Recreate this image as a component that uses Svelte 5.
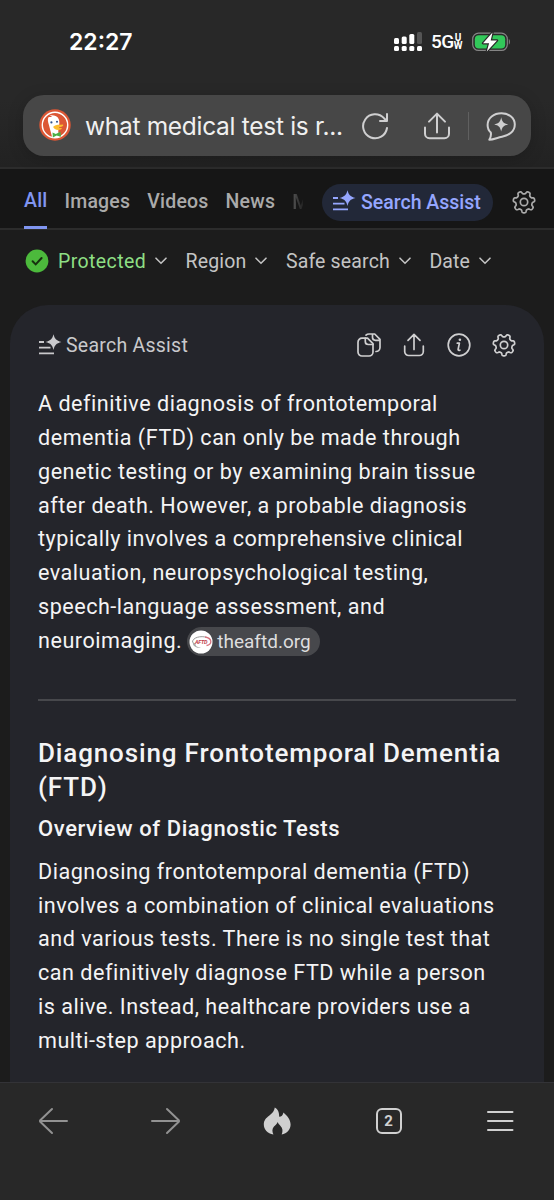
<script lang="ts">
	const tabs = ['Images', 'Videos', 'News'];
	const filters = ['Region', 'Safe search', 'Date'];

	const summary = [
		'A definitive diagnosis of frontotemporal',
		'dementia (FTD) can only be made through',
		'genetic testing or by examining brain tissue',
		'after death. However, a probable diagnosis',
		'typically involves a comprehensive clinical',
		'evaluation, neuropsychological testing,',
		'speech-language assessment, and'
	];

	const overview = [
		'Diagnosing frontotemporal dementia (FTD)',
		'involves a combination of clinical evaluations',
		'and various tests. There is no single test that',
		'can definitively diagnose FTD while a person',
		'is alive. Instead, healthcare providers use a',
		'multi-step approach.'
	];

	// closed outline of a cog with soft lobes
	function cog(teeth: number, mid: number, depth: number) {
		let d = '';
		for (let i = 0; i < 140; i++) {
			const a = (i / 140) * Math.PI * 2;
			const r = mid + depth * Math.tanh(2.2 * Math.cos(teeth * a));
			d += `${i ? 'L' : 'M'}${(12 + r * Math.sin(a)).toFixed(2)} ${(12 + r * Math.cos(a)).toFixed(2)}`;
		}
		return d + 'Z';
	}

	const cogPath = cog(7, 9.5, 1.35);
</script>

{#snippet chevron()}
	<svg class="chevron" viewBox="0 0 12 8"><path d="M1 1.2 6 6.2 11 1.2" /></svg>
{/snippet}

{#snippet gear()}
	<svg class="icon gear" viewBox="0 0 24 24">
		<path d={cogPath} />
		<circle cx="12" cy="12" r="3.7" />
	</svg>
{/snippet}

{#snippet assist()}
	<svg class="assist-icon" viewBox="0 0 24 22">
		<path class="lines" d="M1 8h5M1 13.7h11.5M1 19.4h15" />
		<path class="spark" d="M15.5 .3c1.2 4.700 2.500 6.200 8 7.700-5.500 1.500-6.800 3-8 8-1.200-5-2.500-6.500-8-8 5.500-1.500 6.800-3 8-7.700Z" />
	</svg>
{/snippet}

<div class="screen">
	<header>
		<div class="status">
			<span class="time">22:27</span>
			<div class="signals">
				<svg class="bars" viewBox="0 0 28 20">
					<rect x="0" y="6" width="5" height="6" rx="1.5" />
					<rect x="7.7" y="4.5" width="5" height="7.5" rx="1.5" />
					<rect x="15.3" y="2" width="5" height="10" rx="1.5" />
					<rect class="dim" x="23" y="0" width="5" height="12" rx="1.5" />
					<rect x="0" y="14" width="5" height="5" rx="1.5" />
					<rect x="7.7" y="14" width="5" height="5" rx="1.5" />
					<rect x="15.3" y="14" width="5" height="5" rx="1.5" />
					<rect x="23" y="14" width="5" height="5" rx="1.5" />
				</svg>
				<span class="network">5G</span>
				<span class="band"><span>U</span><span>W</span></span>
				<svg class="battery" viewBox="0 0 39 20">
					<rect x=".7" y="1.2" width="34.6" height="17.2" rx="5.8" fill="none" stroke="#858585" stroke-width="1.2" />
					<rect x="2.8" y="3.2" width="30.4" height="13.2" rx="4" fill="#32c85a" />
					<path d="M36.8 7v5.6c1.7-.7 1.7-4.9 0-5.6Z" fill="#777" />
					<path d="M20.5.5 11 11.2h6.1L14.8 19.5 25 8.5h-6.3Z" fill="#fff" stroke="#282828" stroke-width="2.4" paint-order="stroke" stroke-linejoin="round" />
				</svg>
			</div>
		</div>

		<div class="address">
			<svg class="duck" viewBox="0 0 32 32">
				<circle cx="16" cy="16" r="15.7" fill="#dc5735" />
				<circle cx="16" cy="16" r="12.7" fill="#dc5735" stroke="#fff" stroke-width="1.4" />
				<path d="M9.7 8.1 13 8c-.4-1-1.500-1.400-2.500-1.600 3.700-.7 8.200.2 9.400 4 .8 2.700.6 5.700-.4 7.500l-.2 4.800 1 5.300c-2.400.7-5.400.5-7.300-.2L10 16.200C8.700 12.500 8.400 9.800 9.700 8.100Z" fill="#fff" />
				<circle cx="12.4" cy="13.4" r="1.1" fill="#30528b" />
				<circle cx="18" cy="12.8" r="1" fill="#30528b" />
				<path d="M14.600 17.200c2.500-2 6-1.200 9.200-1.700 1.100.5.4 1.600-1.300 2.200l-3.500 1c1.200.7 3.600-.3 3.900.6-.5 1.700-4.800 2.200-7 .7-1.400-.9-1.800-1.900-1.300-2.800Z" fill="#fdbc2d" />
				<path d="m13.500 23.400 3.300 1.500 4.600-2.200.6 5-4.400-1.200-3.700 2Z" fill="#4caf45" />
			</svg>
			<span class="query">what medical test is r...</span>
			<svg class="icon reload" viewBox="0 0 28 28">
				<path d="M26 16a12 12 0 1 1-3-9.800l2.500 2.500M26 2v7h-7" />
			</svg>
			<svg class="icon upload" viewBox="0 0 28 28">
				<path d="M14 20.500V1.800M6 9.600l8-8 8 8M2 15.500v6.200a4.500 4.500 0 0 0 4.500 4.500h15a4.500 4.500 0 0 0 4.500-4.500v-6.200" />
			</svg>
			<i class="split"></i>
			<svg class="icon chat" viewBox="0 0 30 30">
				<path d="M4.800 21.500C2.600 19.600 1.600 17 1.600 14 1.600 7 7.800 2.300 15.500 2.300S28.800 7 28.800 13.500c0 7-6 11.200-12.800 12.300C11.500 26.600 7.500 28.600 3.300 28.800 4.700 26.500 5.300 24 4.800 21.500Z" />
				<path class="solid" d="M15.200 6.200c1 4.800 2.300 6.200 7 7.200-4.700 1-6 2.400-7 7.200-1-4.800-2.300-6.200-7-7.200 4.700-1 6-2.400 7-7.200Z" />
			</svg>
		</div>
	</header>

	<nav class="tabs">
		<a class="all" href="#all">All</a>
		{#each tabs as tab}
			<a href="#{tab}">{tab}</a>
		{/each}
		<span class="cut">M</span>
		<button class="assist-pill">{@render assist()}<span>Search Assist</span></button>
		{@render gear()}
	</nav>

	<div class="filters">
		<svg class="check" viewBox="0 0 24 24">
			<circle cx="12" cy="12" r="11.4" />
			<path d="m7.600 12.300 3.100 3.100 5.900-6.400" />
		</svg>
		<button class="protected"><span>Protected</span>{@render chevron()}</button>
		{#each filters as filter}
			<button><span>{filter}</span>{@render chevron()}</button>
		{/each}
	</div>

	<main>
		<div class="card-head">
			{@render assist()}
			<span class="card-title">Search Assist</span>
			<div class="actions">
				<svg class="icon" viewBox="0 0 24 24">
					<path d="M5 5.200h5.500L16 10.700V19a4 4 0 0 1-4 4H5a4 4 0 0 1-4-4V9.200a4 4 0 0 1 4-4Z" />
					<path d="M8.300 5.200v3.300a3 3 0 0 0 3 3H16M9 2.200C9.800 1.400 10.800 1 12 1h5.700L23 6.300v8.200a4 4 0 0 1-4 4M15.500 1v3.300a3 3 0 0 0 3 3H23" />
				</svg>
				<svg class="icon" viewBox="0 0 24 24">
					<path d="M12 16.500V1.600M6 7.400l6-6 6 6M2.700 13v5.500a4 4 0 0 0 4 4h10.600a4 4 0 0 0 4-4V13" />
				</svg>
				<svg class="icon" viewBox="0 0 24 24">
					<circle cx="12" cy="12" r="10.800" />
					<path d="M10.300 10.200h2.100l-1.300 6.300q-.2 1.200 1.800.7" />
					<circle class="solid" cx="12.900" cy="6.700" r="1.300" />
				</svg>
				{@render gear()}
			</div>
		</div>

		<p class="summary">
			{#each summary as line}
				<span class="line">{line}</span>
			{/each}
			<span class="line last">
				<span>neuroimaging.</span>
				<a class="source" href="#source">
					<svg viewBox="0 0 24 24">
						<circle cx="12" cy="12" r="11.500" fill="#fff" />
						<path d="M3.500 12.500C3 7.500 12 5.300 18 7.500" fill="none" stroke="#999" stroke-width="1" />
						<path d="M16 7c8 1.500 7 7.500 1.500 8.500" fill="none" stroke="#d7757f" stroke-width="1.300" />
						<path d="M4 12c-1 4 3.500 6 8 6-4-1-5.500-2-5.500-4" fill="#aaa" />
						<text x="6" y="14" font-size="5.500">AFTD</text>
					</svg>
					<span>theaftd.org</span>
				</a>
			</span>
		</p>

		<hr />

		<h2>
			<span class="line">Diagnosing Frontotemporal Dementia</span>
			<span class="line">(FTD)</span>
		</h2>
		<h3>Overview of Diagnostic Tests</h3>
		<p>
			{#each overview as line}
				<span class="line">{line}</span>
			{/each}
		</p>
	</main>

	<footer>
		<svg class="nav-icon muted" viewBox="0 0 32 32"><path d="M29 16H2.500M14 4 2.500 15q-1 1 0 2L14 28" /></svg>
		<svg class="nav-icon muted" viewBox="0 0 32 32"><path d="M2 16h26.500M17 4l11.500 11q1 1 0 2L17 28" /></svg>
		<svg class="nav-icon" viewBox="0 0 32 32">
			<path class="flame" d="M13.800 2.600C17 4.600 18.200 7 18.200 11.800c2.200 0 3.800-1.500 4.200-4.300C26 10.500 29.600 14.500 29.600 19.500c0 5-3.500 8.800-8.900 10.100 1.400-3.600 1-6.600-1.200-8.700-1.500-1.300-2.400-2.300-2.700-3.800-.9 2-2.300 3-3.800 4.500-2 2.200-2 5-.6 8C6.500 28.500 2.800 24.500 2.800 19.300c0-4 2.400-6.500 5.300-8.600C11.500 8.200 13.300 6 13.800 2.600Z" />
		</svg>
		<div class="tab-count">2</div>
		<svg class="nav-icon" viewBox="0 0 32 32"><path d="M4 7h24.500M4 16h24.500M4 25h24.500" /></svg>
	</footer>
</div>

<style>
	:global(body) {
		background: #1c1c1c;
	}

	.screen {
		width: 554px;
		height: 1200px;
		overflow: hidden;
		display: flex;
		flex-direction: column;
		background: #1c1c1c;
		color: #f4f4f5;
		font-family: Roboto, sans-serif;
	}

	header {
		box-sizing: border-box;
		height: 169px;
		flex: none;
		background: linear-gradient(#282828 60%, #222);
		border-bottom: 2px solid #2c2c2c;
	}

	.status {
		height: 95px;
		box-sizing: border-box;
		padding: 0 43px 12px 69px;
		display: flex;
		align-items: center;
		justify-content: space-between;
		color: #fff;
		font-family: Inter, sans-serif;
	}

	.time {
		font-size: 23px;
		font-weight: 600;
	}

	.signals {
		display: flex;
		align-items: center;
	}

	.bars {
		width: 28px;
		height: 20px;
		fill: #fff;
	}

	.bars .dim {
		fill: #555;
	}

	.network {
		margin-left: 9px;
		width: 23px;
		font: 500 19px Roboto, sans-serif;
		letter-spacing: -0.5px;
	}

	.band {
		display: flex;
		flex-direction: column;
		align-items: center;
		width: 8px;
		font: 700 10px/8px Roboto, sans-serif;
	}

	.battery {
		margin-left: 10px;
		width: 39px;
		height: 20px;
	}

	.address {
		margin: 0 23px;
		height: 61px;
		box-sizing: border-box;
		padding: 0 15px 0 16px;
		border-radius: 21px;
		background: #474747;
		box-shadow: 0 3px 16px rgba(0, 0, 0, 0.18);
		display: flex;
		align-items: center;
	}

	.duck {
		width: 32px;
		height: 32px;
		margin-top: -2px;
	}

	.query {
		margin-left: 14px;
		width: 276px;
		font: 400 24.5px Inter, sans-serif;
		letter-spacing: -0.3px;
		white-space: nowrap;
		color: #f0f0f0;
	}

	svg {
		flex: none;
		display: block;
	}

	.icon {
		width: 24px;
		height: 24px;
		fill: none;
		stroke: #cfcfd0;
		stroke-width: 1.7;
		stroke-linecap: round;
		stroke-linejoin: round;
	}

	.solid {
		fill: #cfcfd0;
		stroke: none;
	}

	.reload,
	.upload {
		width: 28px;
		height: 28px;
		stroke-width: 2;
	}

	.upload {
		margin-left: 34px;
	}

	.split {
		width: 1px;
		height: 28px;
		margin: 0 17px;
		background: #606060;
	}

	.chat {
		width: 30px;
		height: 30px;
		stroke-width: 2;
	}

	.tabs {
		box-sizing: border-box;
		height: 61px;
		flex: none;
		padding: 0 18px 0 24px;
		display: flex;
		align-items: center;
		background: #161616;
		border-bottom: 2px solid #2c2c2c;
		font-size: 19.5px;
		font-weight: 500;
		letter-spacing: 0.2px;
	}

	.tabs a {
		height: 100%;
		line-height: 66px;
		margin-right: 17px;
		color: #aaa;
		text-decoration: none;
	}

	.tabs .all {
		height: 61px;
		flex: none;
		box-sizing: border-box;
		color: #8095f0;
		border-bottom: 3px solid #8095f0;
	}

	.cut {
		width: 11px;
		margin-top: 7px;
		overflow: hidden;
		color: transparent;
		background: linear-gradient(90deg, #555, #222);
		background-clip: text;
	}

	button {
		border: 0;
		padding: 0;
		background: none;
		display: flex;
		align-items: center;
		font: inherit;
		letter-spacing: inherit;
		color: inherit;
	}

	.assist-pill {
		margin: 7px 19px 0 auto;
		height: 37px;
		width: 171px;
		padding-left: 10px;
		border-radius: 19px;
		background: #222838;
		color: #95a6ff;
		white-space: nowrap;
		letter-spacing: 0;
	}

	.assist-icon {
		width: 24px;
		height: 22px;
		margin-top: -2px;
		color: inherit;
	}

	.assist-icon .lines {
		fill: none;
		stroke: currentColor;
		stroke-width: 1.8;
	}

	.assist-icon .spark {
		fill: currentColor;
	}

	.assist-pill span {
		margin-left: 5px;
	}

	.tabs .gear {
		margin-top: 7px;
		stroke: #aaa;
	}

	.filters {
		height: 75px;
		flex: none;
		box-sizing: border-box;
		padding: 0 25px 13px;
		display: flex;
		align-items: center;
		font-size: 19.5px;
		letter-spacing: 0.15px;
		color: #c4c4c4;
	}

	.check {
		width: 24px;
		height: 24px;
		margin-right: 9px;
	}

	.check circle {
		fill: #4cba3c;
	}

	.check path {
		fill: none;
		stroke: #17300f;
		stroke-width: 2;
		stroke-linecap: round;
	}

	.filters button {
		margin-right: 18.5px;
	}

	.filters .protected {
		color: #8edf84;
		letter-spacing: 0.4px;
	}

	.chevron {
		width: 12px;
		height: 8px;
		margin-left: 9px;
		fill: none;
		stroke: #c4c4c4;
		stroke-width: 1.6;
		stroke-linecap: round;
	}

	main {
		flex: 1;
		min-height: 0;
		overflow: hidden;
		margin: 0 10px;
		padding: 0 28px;
		border-radius: 38px 38px 0 0;
		background: #24252b;
	}

	.card-head {
		height: 81px;
		display: flex;
		align-items: center;
		color: #c9c9cc;
	}

	.card-title {
		margin-left: 4px;
		font-size: 19.5px;
		letter-spacing: 0.25px;
	}

	.actions {
		margin: -2px 0 0 auto;
		display: flex;
		gap: 21px;
	}

	p {
		margin: 0;
		font-size: 21.6px;
		line-height: 33.85px;
		letter-spacing: 0.5px;
	}

	.summary {
		margin-top: 1px;
	}

	.line {
		display: block;
		white-space: nowrap;
	}

	.last {
		display: flex;
		align-items: center;
	}

	.source {
		margin: 2px 0 0 5px;
		width: 133px;
		height: 29px;
		box-sizing: border-box;
		padding-left: 2px;
		border-radius: 15px;
		background: #47484c;
		display: flex;
		align-items: center;
		color: #dededf;
		font-size: 19px;
		letter-spacing: 0;
		text-decoration: none;
	}

	.source svg {
		width: 24px;
		height: 24px;
		margin-right: 4px;
	}

	.source text {
		font-weight: 700;
		font-style: italic;
		letter-spacing: -0.3px;
		fill: #bf3c4c;
	}

	hr {
		margin: 41px 0 0;
		border: 0;
		height: 2px;
		background: #47484c;
	}

	h2 {
		margin: 35px 0 0;
		font-size: 26px;
		font-weight: 500;
		line-height: 34px;
		letter-spacing: 0.85px;
	}

	h3 {
		margin: 8px 0 9px;
		font-size: 22px;
		font-weight: 500;
		line-height: 34px;
		letter-spacing: 0.6px;
	}

	footer {
		box-sizing: border-box;
		height: 118px;
		flex: none;
		padding: 22px 38px 0;
		display: flex;
		align-items: flex-start;
		justify-content: space-between;
		background: #282828;
		border-top: 1px solid #333337;
	}

	.nav-icon {
		width: 32px;
		height: 32px;
		fill: none;
		stroke: #d0d0d0;
		stroke-width: 2;
		stroke-linecap: round;
		stroke-linejoin: round;
	}

	.muted {
		stroke: #929292;
	}

	.flame {
		fill: #d0d0d0;
		stroke: none;
	}

	.tab-count {
		box-sizing: border-box;
		width: 26px;
		height: 26px;
		margin: 3px;
		border: 2px solid #d0d0d0;
		border-radius: 6px;
		text-align: center;
		font: 700 15px/22px Roboto, sans-serif;
		color: #d0d0d0;
	}
</style>
